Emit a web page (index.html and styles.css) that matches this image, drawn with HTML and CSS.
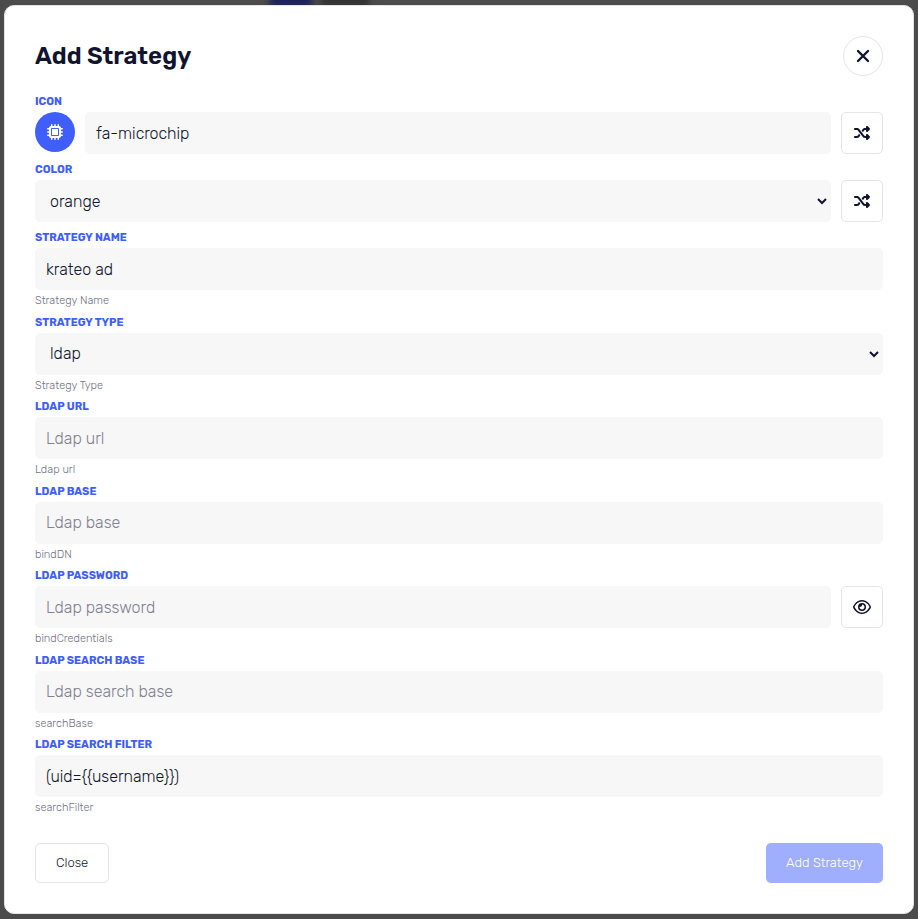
FILE: index.html
```html
<!DOCTYPE html>
<html lang="en">
<head>
<meta charset="utf-8">
<title>Add Strategy</title>
<link rel="stylesheet" href="styles.css">
</head>
<body>
<svg width="0" height="0" class="sprite" aria-hidden="true">
  <symbol id="shuffle" viewBox="0 0 512 512"><path d="M403.800 34.400c12-5 25.700-2.200 34.900 6.900l64 64c6 6 9.400 14.100 9.400 22.600s-3.400 16.600-9.400 22.600l-64 64c-9.200 9.200-22.900 11.900-34.900 6.900s-19.800-16.600-19.800-29.600V160H352c-10.100 0-19.600 4.700-25.600 12.800L284 229.300 244 176l31.200-41.600C293.300 110.200 321.800 96 352 96h32V64c0-12.900 7.800-24.600 19.800-29.600zM164 282.700L204 336l-31.200 41.600C154.700 401.800 126.200 416 96 416H32c-17.700 0-32-14.300-32-32s14.300-32 32-32h64c10.100 0 19.600-4.700 25.600-12.800L164 282.700zm274.600 188c-9.200 9.200-22.900 11.900-34.900 6.900s-19.800-16.600-19.800-29.600V416h-32c-30.200 0-58.700-14.200-76.800-38.400L121.600 172.800c-6-8.100-15.500-12.800-25.600-12.800H32c-17.700 0-32-14.300-32-32s14.300-32 32-32h64c30.200 0 58.700 14.200 76.800 38.400L326.400 339.200c6 8.100 15.500 12.800 25.600 12.800h32v-32c0-12.900 7.800-24.600 19.800-29.600s25.700-2.200 34.900 6.900l64 64c6 6 9.400 14.100 9.400 22.600s-3.400 16.600-9.400 22.600l-64 64z"/></symbol>
</svg>
<div class="backdrop">
  <span class="blot blot-blue"></span>
  <span class="blot blot-dark"></span>
</div>
<main class="modal">
  <header class="modal-head">
    <h1>Add Strategy</h1>
    <button type="button" class="dismiss" aria-label="Dismiss">
      <svg width="20" height="20" viewBox="0 0 20 20"><path d="M5 5l10 10M15 5L5 15" fill="none" stroke="currentColor" stroke-width="2.400" stroke-linecap="round"/></svg>
    </button>
  </header>
  <form class="fields" id="strategy">
    <div class="field">
      <label for="icon">Icon</label>
      <div class="row">
        <span class="avatar">
          <svg width="16" height="16" viewBox="0 0 512 512"><path fill="currentColor" d="M176 24c0-13.300-10.700-24-24-24s-24 10.700-24 24v40c-35.300 0-64 28.700-64 64H24c-13.300 0-24 10.700-24 24s10.700 24 24 24h40v56H24c-13.300 0-24 10.700-24 24s10.700 24 24 24h40v56H24c-13.300 0-24 10.700-24 24s10.700 24 24 24h40c0 35.300 28.700 64 64 64v40c0 13.300 10.700 24 24 24s24-10.700 24-24v-40h56v40c0 13.300 10.700 24 24 24s24-10.700 24-24v-40h56v40c0 13.300 10.700 24 24 24s24-10.700 24-24v-40c35.300 0 64-28.700 64-64h40c13.300 0 24-10.700 24-24s-10.700-24-24-24h-40v-56h40c13.300 0 24-10.700 24-24s-10.700-24-24-24h-40v-56h40c13.300 0 24-10.700 24-24s-10.700-24-24-24h-40c0-35.300-28.700-64-64-64V24c0-13.300-10.700-24-24-24s-24 10.700-24 24v40h-56V24c0-13.300-10.700-24-24-24s-24 10.700-24 24v40h-56V24zM160 128h192c17.700 0 32 14.300 32 32v192c0 17.700-14.300 32-32 32H160c-17.700 0-32-14.300-32-32V160c0-17.700 14.300-32 32-32zm192 32H160v192h192V160z"/></svg>
        </span>
        <input class="control" id="icon" type="text" value="fa-microchip">
        <button type="button" class="square" aria-label="Random icon"><svg width="16" height="16"><use href="#shuffle"/></svg></button>
      </div>
    </div>
    <div class="field">
      <label for="color">Color</label>
      <div class="row">
        <select class="control" id="color"><option>orange</option></select>
        <button type="button" class="square" aria-label="Random color"><svg width="16" height="16"><use href="#shuffle"/></svg></button>
      </div>
    </div>
    <div class="field">
      <label for="name">Strategy Name</label>
      <div class="row"><input class="control" id="name" type="text" value="krateo ad"></div>
      <small>Strategy Name</small>
    </div>
    <div class="field">
      <label for="type">Strategy Type</label>
      <div class="row"><select class="control" id="type"><option>ldap</option></select></div>
      <small>Strategy Type</small>
    </div>
    <div class="field">
      <label for="url">Ldap url</label>
      <div class="row"><input class="control" id="url" type="text" placeholder="Ldap url"></div>
      <small>Ldap url</small>
    </div>
    <div class="field">
      <label for="base">Ldap base</label>
      <div class="row"><input class="control" id="base" type="text" placeholder="Ldap base"></div>
      <small>bindDN</small>
    </div>
    <div class="field">
      <label for="password">Ldap password</label>
      <div class="row">
        <input class="control" id="password" type="password" placeholder="Ldap password">
        <button type="button" class="square" aria-label="Show password">
          <svg width="18" height="16" viewBox="0 0 576 512"><path fill="currentColor" d="M288 80c-65.200 0-118.800 29.600-159.900 67.700C89.600 183.500 63 226 49.400 256c13.600 30 40.200 72.500 78.600 108.300C169.200 402.400 222.800 432 288 432s118.800-29.600 159.900-67.700C486.400 328.500 513 286 526.600 256c-13.600-30-40.200-72.500-78.600-108.300C406.800 109.600 353.200 80 288 80zM95.400 112.600C142.500 68.800 207.200 32 288 32s145.500 36.800 192.600 80.600c46.800 43.500 78.100 95.400 93 131.100 3.300 7.900 3.300 16.700 0 24.600-14.900 35.700-46.200 87.700-93 131.100C433.500 443.200 368.800 480 288 480s-145.500-36.800-192.600-80.600C48.600 356 17.300 304 2.500 268.300c-3.300-7.900-3.300-16.700 0-24.600C17.300 208 48.600 156 95.400 112.600zM288 336c44.200 0 80-35.800 80-80s-35.800-80-80-80c-.7 0-1.300 0-2 0 1.300 5.100 2 10.500 2 16 0 35.300-28.700 64-64 64-5.500 0-10.900-.7-16-2v2c0 44.200 35.800 80 80 80zm0-208a128 128 0 1 1 0 256 128 128 0 1 1 0-256z"/></svg>
        </button>
      </div>
      <small>bindCredentials</small>
    </div>
    <div class="field">
      <label for="search-base">Ldap search base</label>
      <div class="row"><input class="control" id="search-base" type="text" placeholder="Ldap search base"></div>
      <small>searchBase</small>
    </div>
    <div class="field">
      <label for="search-filter">Ldap search filter</label>
      <div class="row"><input class="control" id="search-filter" type="text" value="(uid={{username}})"></div>
      <small>searchFilter</small>
    </div>
  </form>
  <footer class="modal-foot">
    <button type="button" class="btn">Close</button>
    <button type="submit" form="strategy" class="btn btn-primary">Add Strategy</button>
  </footer>
</main>
</body>
</html>
```
FILE: styles.css
```css
* { box-sizing: border-box; }

body {
  margin: 0;
  padding: 5px 4px;
  background: #4b4b4b;
  color: #11142d;
  font-family: Rubik, Roboto, "Liberation Sans", sans-serif;
  font-weight: 300;
}

button, input, select { font: inherit; color: inherit; }

.sprite { position: absolute; }

.backdrop {
  position: fixed;
  inset: 0;
  z-index: -1;
  overflow: hidden;
}

.blot {
  position: absolute;
  top: -8px;
  height: 16px;
  filter: blur(3px);
}

.blot-blue { left: 270px; width: 42px; background: #1c2357; }
.blot-dark { left: 321px; width: 48px; background: #343437; }

.modal {
  padding: 30px;
  border: 1px solid #e4e4e4;
  border-radius: 10px;
  background: #fff;
}

.modal-head, .modal-foot {
  display: flex;
  align-items: center;
  justify-content: space-between;
}

.modal-head { margin-bottom: 20px; }
.modal-foot { margin-top: 29px; }

h1 {
  margin: 0;
  font-size: 24px;
  line-height: 40px;
  font-weight: 600;
}

.dismiss, .square {
  display: flex;
  flex: none;
  align-items: center;
  justify-content: center;
  padding: 0;
  border: 1px solid #e4e4e4;
  background: #fff;
}

.dismiss { width: 40px; height: 40px; border-radius: 50%; }
.square { width: 42px; height: 42px; border-radius: 5px; }
.square svg { fill: currentColor; }

.fields { display: flex; flex-direction: column; gap: 10px; }

.field { display: flex; flex-direction: column; }

label {
  margin-bottom: 4px;
  color: #3f5efb;
  font-size: 11px;
  line-height: 12px;
  font-weight: 700;
  text-transform: uppercase;
}

.row { display: flex; gap: 10px; }

.avatar {
  display: flex;
  flex: none;
  align-items: center;
  justify-content: center;
  width: 40px;
  height: 40px;
  border-radius: 50%;
  background: #3f5efb;
  color: #fff;
}

.control {
  flex: 1;
  min-width: 0;
  height: 42px;
  padding: 0 10px;
  border: 1px solid #f7f7f7;
  border-radius: 5px;
  background: #f7f7f7;
  font-size: 16px;
}

select.control { padding-right: 0; }

.control::placeholder { color: #808191; }

small {
  margin: 3px 0 -3px;
  color: #6f7082;
  font-size: 11px;
  line-height: 1.5;
}

.btn {
  height: 40px;
  padding: 0 20px;
  border: 1px solid #e4e4e4;
  border-radius: 5px;
  background: #fff;
  font-size: 13px;
}

.btn-primary {
  border: 0;
  background: #9faefd;
  color: #fff;
}
```
